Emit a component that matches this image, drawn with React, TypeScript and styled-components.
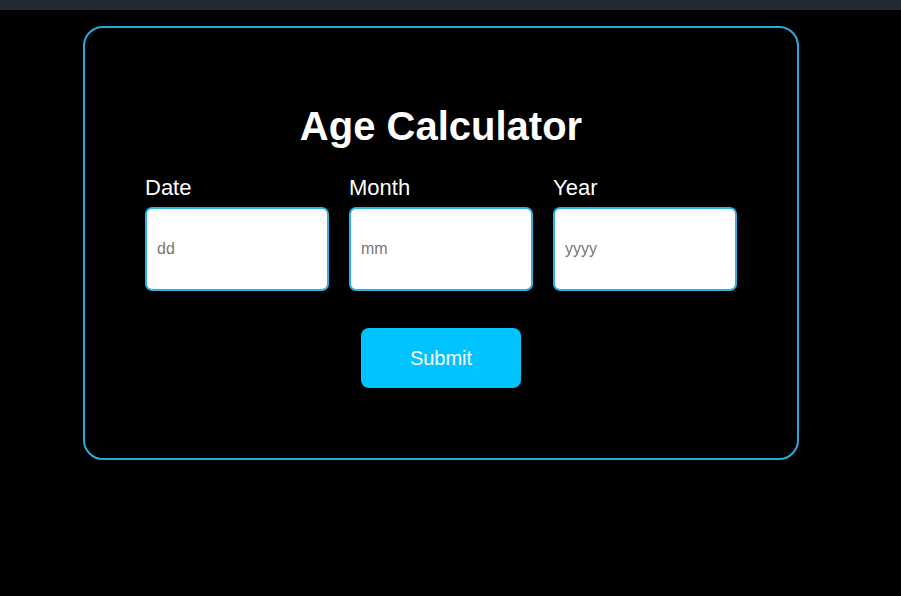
import React from "react";
import styled, { createGlobalStyle } from "styled-components";

const Global = createGlobalStyle`
  html, body { margin: 0; padding: 0; background: #000; }
  body { font-family: "Liberation Sans", Arial, sans-serif; }
`;

const TopBar = styled.div`
  height: 10px;
  background: #252936;
`;

const Page = styled.main`
  padding: 16px 0 0 83px;
`;

const Card = styled.section`
  width: 712px;
  box-sizing: content-box;
  border: 2px solid #2aa9dc;
  border-radius: 20px;
  padding: 76px 0 70px;
  display: flex;
  flex-direction: column;
  align-items: center;
`;

const Title = styled.h1`
  margin: 0;
  color: #fff;
  font-size: 40px;
  font-weight: 700;
`;

const Fields = styled.div`
  display: grid;
  grid-template-columns: repeat(3, 184px);
  column-gap: 20px;
  margin-top: 26px;
`;

const Field = styled.label`
  display: flex;
  flex-direction: column;
  gap: 6px;
`;

const LabelText = styled.span`
  color: #fff;
  font-size: 22px;
`;

const Input = styled.input`
  box-sizing: border-box;
  width: 184px;
  height: 84px;
  border: 2px solid #2eb0e0;
  border-radius: 7px;
  background: #fff;
  padding: 0 10px;
  font-family: "Liberation Sans", Arial, sans-serif;
  font-size: 16px;
  outline: none;
  &::placeholder { color: #767676; }
`;

const Button = styled.button`
  margin-top: 37px;
  width: 160px;
  height: 60px;
  border: none;
  border-radius: 8px;
  background: #00c3ff;
  color: #fff;
  font-family: "Liberation Sans", Arial, sans-serif;
  font-size: 20px;
  cursor: pointer;
`;

export default function App() {
  const fields = [
    { label: "Date", ph: "dd" },
    { label: "Month", ph: "mm" },
    { label: "Year", ph: "yyyy" },
  ];
  return (
    <>
      <Global />
      <TopBar />
      <Page>
        <Card>
          <Title>Age Calculator</Title>
          <Fields>
            {fields.map((f) => (
              <Field key={f.label}>
                <LabelText>{f.label}</LabelText>
                <Input placeholder={f.ph} />
              </Field>
            ))}
          </Fields>
          <Button>Submit</Button>
        </Card>
      </Page>
    </>
  );
}
